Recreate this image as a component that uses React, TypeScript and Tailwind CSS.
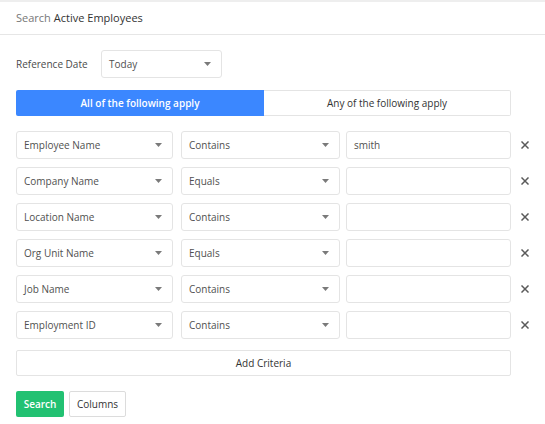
const rows = [
  { field: 'Employee Name', op: 'Contains', value: 'smith' },
  { field: 'Company Name', op: 'Equals', value: '' },
  { field: 'Location Name', op: 'Contains', value: '' },
  { field: 'Org Unit Name', op: 'Equals', value: '' },
  { field: 'Job Name', op: 'Contains', value: '' },
  { field: 'Employment ID', op: 'Contains', value: '' },
]

function Caret() {
  return (
    <svg width="7" height="4" viewBox="0 0 7 4" className="flex-shrink-0">
      <path d="M0 0h7L3.5 4z" fill="#7a7a7a" />
    </svg>
  )
}

function Select({ label, className }: { label: string; className: string }) {
  return (
    <div
      className={`h-[28px] flex-shrink-0 flex items-center justify-between pl-[7px] pr-[10px] bg-white border border-[#e4e4e4] rounded-[3px] text-[10px] text-[#505050] ${className}`}
    >
      <span>{label}</span>
      <Caret />
    </div>
  )
}

function Remove() {
  return (
    <svg width="8" height="8" viewBox="0 0 8 8" className="ml-[10px] flex-shrink-0">
      <path d="M1 1l6 6M7 1L1 7" stroke="#5a5a5a" strokeWidth="1.5" strokeLinecap="square" />
    </svg>
  )
}

export default function App() {
  return (
    <div className="w-[545px] h-[424px] bg-white overflow-hidden" style={{ fontFamily: '"Open Sans", sans-serif' }}>
      <div className="border-t-2 border-[#eeeeee]">
        <div className="h-[33px] flex items-center px-[16px] border-b border-[#e6e6e6] text-[11px]">
          <span className="text-[#777]">Search</span>
          <span className="text-[#333] ml-[3px]">Active Employees</span>
        </div>

        <div className="pl-[16px] pr-[34px]">
          <div className="flex items-center mt-[15px]">
            <span className="w-[85px] text-[10px] text-[#4a4a4a]">Reference Date</span>
            <Select label="Today" className="w-[121px]" />
          </div>

          <div className="flex mt-[12px] h-[26px] text-[10px]">
            <div className="w-[248px] bg-[#3b87ff] text-white font-semibold flex items-center justify-center rounded-l-[2px]">
              All of the following apply
            </div>
            <div className="flex-1 border border-l-0 border-[#e4e4e4] text-[#333] flex items-center justify-center rounded-r-[2px]">
              Any of the following apply
            </div>
          </div>

          <div className="flex flex-col gap-[8px] mt-[15px]">
            {rows.map((r) => (
              <div key={r.field} className="flex items-center">
                <Select label={r.field} className="w-[157px]" />
                <Select label={r.op} className="w-[159px] ml-[8px]" />
                <div className="w-[165px] h-[28px] flex-shrink-0 ml-[6px] border border-[#e4e4e4] rounded-[3px] flex items-center px-[7px] text-[10px] text-[#505050]">
                  {r.value}
                </div>
                <Remove />
              </div>
            ))}
          </div>

          <div className="mt-[11px] h-[26px] border border-[#e4e4e4] rounded-[2px] flex items-center justify-center text-[10px] text-[#333]">
            Add Criteria
          </div>

          <div className="flex gap-[5px] mt-[15px]">
            <div className="h-[26px] w-[48px] bg-[#22c172] rounded-[2px] text-white font-semibold text-[10px] flex items-center justify-center">
              Search
            </div>
            <div className="h-[26px] w-[57px] border border-[#dcdcdc] rounded-[2px] text-[#333] text-[10px] flex items-center justify-center">
              Columns
            </div>
          </div>
        </div>
      </div>
    </div>
  )
}
